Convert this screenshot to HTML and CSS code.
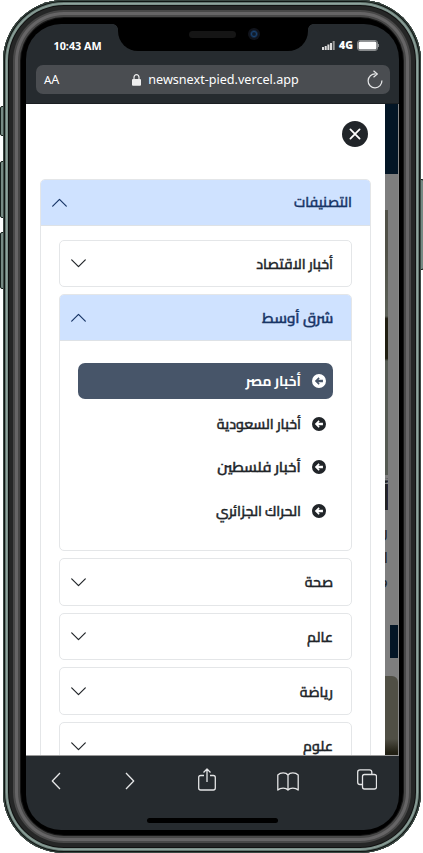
FILE: index.html
```html
<!DOCTYPE html>
<html lang="ar">
<head>
<meta charset="utf-8">
<title>newsnext</title>
<link rel="stylesheet" href="styles.css">
</head>
<body>
<svg width="0" height="0" class="defs">
  <symbol id="chev" viewBox="0 0 16 16"><path d="M1.6 4.6 8 11l6.400-6.400" fill="none" stroke="currentColor" stroke-width="1.150" stroke-linecap="round" stroke-linejoin="round"/></symbol>
  <symbol id="arrow" viewBox="0 0 16 16"><path fill="currentColor" fill-rule="evenodd" d="M8 0a8 8 0 1 0 0 16A8 8 0 0 0 8 0ZM7.500 3.700 3.200 8l4.300 4.300 1.300-1.300-1.500-1.500h5.200v-3H7.300L8.800 5Z"/></symbol>
</svg>
<i class="key k1"></i><i class="key k2"></i><i class="key k3"></i><i class="key k4"></i>
<div class="phone">
  <div class="screen">
    <header class="top">
      <div class="status">
        <span class="time">10:43 AM</span>
        <span class="signal">
          <svg width="13" height="9" viewBox="0 0 13 9"><path fill="#ddd" d="M0 6h2v3H0zM2.700 5h2v4h-2zM5.400 3.500h2V9h-2zM8 2h2v7H8z"/><path fill="#999" d="M10.700 0h2v9h-2z"/></svg>
          <b>4G</b>
          <svg width="22" height="11" viewBox="0 0 22 11"><rect x=".5" y=".5" width="20" height="10" rx="2.500" fill="none" stroke="#888b8d"/><rect x="1.500" y="1.500" width="18" height="8" rx="1.500" fill="#fff"/><path d="M21.500 4v3" stroke="#888b8d"/></svg>
        </span>
      </div>
      <div class="url">
        <span class="aa"><small>A</small>A</span>
        <span class="host"><svg width="9" height="12" viewBox="0 0 9 12"><rect y="5" width="9" height="6.800" rx="1" fill="#eee"/><path d="M2 5.500V3.200a2.500 2.500 0 0 1 5 0v2.300" fill="none" stroke="#eee" stroke-width="1.200"/></svg>newsnext-pied.vercel.app</span>
        <svg class="reload" width="16" height="19" viewBox="0 0 16 19"><path d="M8.500 4A6.900 6.900 0 1 0 14.900 10.500M6.500.8 10.300 4 6.500 7.300" fill="none" stroke="#e3e4e5" stroke-width="1.250"/></svg>
      </div>
    </header>
    <main class="view">
      <aside class="drawer" dir="rtl">
        <button class="close"><svg width="12" height="12" viewBox="0 0 12 12"><path d="m1.400 1.400 9.200 9.200m0-9.200-9.200 9.200" stroke="#fff" stroke-width="1.800" stroke-linecap="round"/></svg></button>
        <section class="acc outer">
          <h2 class="head open"><span>التصنيفات</span><svg class="chev"><use href="#chev"/></svg></h2>
          <div class="inner">
            <section class="acc"><h3 class="head"><span>أخبار الاقتصاد</span><svg class="chev"><use href="#chev"/></svg></h3></section>
            <section class="acc">
              <h3 class="head open"><span class="wide">شرق أوسط</span><svg class="chev"><use href="#chev"/></svg></h3>
              <ul class="list">
                <li class="active"><svg><use href="#arrow"/></svg><span>أخبار مصر</span></li>
                <li><svg><use href="#arrow"/></svg><span>أخبار السعودية</span></li>
                <li><svg><use href="#arrow"/></svg><span class="wide">أخبار فلسطين</span></li>
                <li><svg><use href="#arrow"/></svg><span>الحراك الجزائري</span></li>
              </ul>
            </section>
            <section class="acc"><h3 class="head"><span>صحة</span><svg class="chev"><use href="#chev"/></svg></h3></section>
            <section class="acc"><h3 class="head"><span>عالم</span><svg class="chev"><use href="#chev"/></svg></h3></section>
            <section class="acc"><h3 class="head"><span>رياضة</span><svg class="chev"><use href="#chev"/></svg></h3></section>
            <section class="acc"><h3 class="head"><span>علوم</span><svg class="chev"><use href="#chev"/></svg></h3></section>
          </div>
        </section>
      </aside>
      <div class="behind">
        <div class="nav"></div>
        <div class="photo"></div>
        <div class="clip big"><span>أ</span></div>
        <div class="clip"><span>ك</span></div>
        <div class="clip"><span>ا</span></div>
        <div class="clip"><span>و</span></div>
        <div class="tag"></div>
        <div class="card"></div>
      </div>
    </main>
    <footer class="bar">
      <svg width="10" height="18" viewBox="0 0 10 18"><path d="M9 1 1.300 9 9 17"/></svg>
      <svg width="10" height="18" viewBox="0 0 10 18"><path d="m1 1 7.700 8L1 17"/></svg>
      <svg class="share" width="18" height="23" viewBox="0 0 18 23"><path d="M6 7.500H2.700q-2 0-2 2V20q0 2 2 2h12.600q2 0 2-2V9.500q0-2-2-2H12M9 14V1M5.500 4.500 9 1l3.500 3.500"/></svg>
      <svg width="22" height="19" viewBox="0 0 22 19"><path d="M11 3v15C9 15.400 3.500 15.400.8 18V3C3.500.200 9 .200 11 3Zm0 0c2-2.800 7.500-2.800 10.200 0v15c-2.700-2.600-8.200-2.600-10.200 0"/></svg>
      <svg class="tabs" width="20" height="21" viewBox="0 0 20 21"><rect x="5.500" y="5.500" width="14" height="14.500" rx="2"/><path d="M5.500 15.500H3q-2.300 0-2.300-2.300V3Q.7.800 3 .8h9.500q2.300 0 2.300 2.300v2.400"/></svg>
    </footer>
    <div class="home"></div>
  </div>
  <div class="notch"><i class="speaker"></i><i class="cam"></i></div>
</div>
</body>
</html>
```
FILE: styles.css
```css
* { box-sizing: border-box; }
body { margin: 0; width: 423px; height: 853px; overflow: hidden; background: #fff; position: relative; }
.defs { position: absolute; }
.phone {
  position: relative; margin-left: 3px; width: 418px; height: 853px; padding: 24px 22px 23px 23px; border-radius: 61px; background: #000;
  box-shadow: inset 0 0 0 1px #3c4944, inset 0 0 0 2px #101513, inset 0 0 0 3px #62756f, inset 0 0 0 4px #8fa39c, inset 0 0 0 5px #7c908a, inset 0 0 0 6px #111, inset 0 0 0 10px #252626, inset 0 0 0 12px #484848, inset 0 0 0 15px #666566, inset 0 0 0 17px #484848, inset 0 0 0 18px #161616;
}
.key { position: absolute; background: #768a84; border: 1px solid #16201c; border-radius: 2px; width: 5px; left: 0; }
.k1 { top: 106px; height: 30px; }
.k2 { top: 161px; height: 57px; }
.k3 { top: 232px; height: 57px; }
.k4 { top: 179px; height: 91px; left: 419px; }
.screen { position: relative; width: 373px; height: 806px; border-radius: 35px; overflow: hidden; background: #262b2f; display: flex; flex-direction: column; font-family: "Noto Sans", "Open Sans", sans-serif; color: #fff; }
.top { height: 80px; flex: none; padding: 0 9px 0 10px; border-bottom: 1px solid #1b1f22; }
.status { height: 41px; display: flex; justify-content: space-between; padding: 13.500px 11px 0 17.500px; font-weight: 700; font-size: 10.8px; line-height: 15px; }
.signal { display: flex; gap: 4px; height: 15px; align-items: center; }
.signal b { font-size: 10.5px; padding-top: 1px; }
.url { height: 29px; border-radius: 7px; background: #4a4d51; display: flex; align-items: center; justify-content: space-between; padding: 0 7px 0 8px; font-size: 12.6px; }
.aa { font-size: 12.6px; width: 20px; white-space: nowrap; }
.aa small { font-size: 11.5px; }
.host { display: flex; align-items: center; gap: 7px; }
.view { height: 652px; flex: none; display: flex; overflow: hidden; background: #7e7e7e; border-bottom: 1px solid #999; }
.drawer { width: 359px; flex: none; background: #fff; height: 652px; overflow: hidden; padding: 17px 14px 0; color: #212529; font-family: "Cairo", "Noto Sans Arabic", "DejaVu Sans", sans-serif; direction: rtl; }
.close { display: flex; align-items: center; justify-content: center; width: 26px; height: 26px; border: 0; border-radius: 50%; background: #212529; padding: 0; margin: 0 3px 32px 0; }
.acc { border: 1px solid #e4e6e8; border-radius: 5px; overflow: hidden; background: #fff; }
.outer { height: 700px; }
.head { margin: 0; height: 45.600px; display: flex; align-items: center; justify-content: space-between; padding: 1px 18px 0 10px; font-size: 14px; font-weight: 600; }
.head span, .list span { -webkit-text-stroke: 0.400px currentColor; }
.head.open { background: #cfe2ff; color: #183567; border-bottom: 1px solid #dee2e6; padding-top: 0; }
.open .chev { transform: rotate(180deg); }
.chev { width: 17px; height: 17px; }
.inner { padding: 14px 18px; display: flex; flex-direction: column; gap: 7.100px; }
.inner .acc { flex: none; }
.list { list-style: none; margin: 0; padding: 22px 18px 21px; height: 209px; display: flex; flex-direction: column; gap: 7.300px; font-size: 14px; font-weight: 600; }
.list li { height: 36px; flex: none; display: flex; align-items: center; gap: 11px; padding-right: 7px; border-radius: 7px; }
.list svg { width: 14px; height: 14px; }
.list .active { background: #475569; color: #fff; font-weight: 700; }
.list .active span { -webkit-text-stroke: 0; }
.drawer .wide { transform: scaleX(1.075); transform-origin: right; }
.behind { width: 14px; height: 652px; overflow: hidden; color: #222; border-right: 1px solid #898989; font-family: "DejaVu Sans", sans-serif; }
.nav { height: 70px; background: #031525; margin-bottom: 36px; }
.photo { width: 3px; height: 265px; background: linear-gradient(#505047 0 15%, #5c6057 40%, #1f1d10 41% 56%, #555a52 57%); margin-bottom: 3px; }
.clip { width: 3px; height: 22px; overflow: hidden; font-size: 15px; line-height: 22px; display: flex; justify-content: flex-end; }
.clip.big { height: 40px; font-size: 34px; line-height: 40px; font-weight: 700; margin-bottom: 7px; }
.clip.big span { margin-right: -3px; }
.tag { width: 9px; height: 33px; margin: 34px 0 18px 5px; background: #031525; }
.card { height: 90px; border-radius: 0 6px 0 0; background: linear-gradient(#504f45 70%, #222014 85%); }
.bar { height: 48px; display: grid; grid-template-columns: 73.500px 73.500px 79px 80px 20px; align-items: center; padding: 2px 0 0 25px; flex: none; }
.bar svg { fill: none; stroke: #e4e5e6; stroke-width: 1.300; stroke-linejoin: round; }
.bar .share, .bar .tabs { margin-bottom: 4px; }
.home { width: 131px; height: 5px; border-radius: 3px; background: #000; margin: 14px auto 0; }
.notch { position: absolute; top: 20px; left: 115px; width: 190px; height: 31px; background: #000; border-radius: 0 0 20px 20px; }
.notch::before, .notch::after { content: ""; position: absolute; top: 4px; width: 5px; height: 5px; }
.notch::before { left: -5px; background: radial-gradient(circle at 0 100%, transparent 4.500px, #000 5px); }
.notch::after { right: -5px; background: radial-gradient(circle at 100% 100%, transparent 4.500px, #000 5px); }
.speaker { position: absolute; left: 71px; top: 11px; width: 47px; height: 7px; border-radius: 4px; background: #151515; }
.cam { position: absolute; left: 130px; top: 8px; width: 12px; height: 12px; border-radius: 50%; background: radial-gradient(circle, #101b2a 15%, #18406e 30%, #10131b 50%); }
```
